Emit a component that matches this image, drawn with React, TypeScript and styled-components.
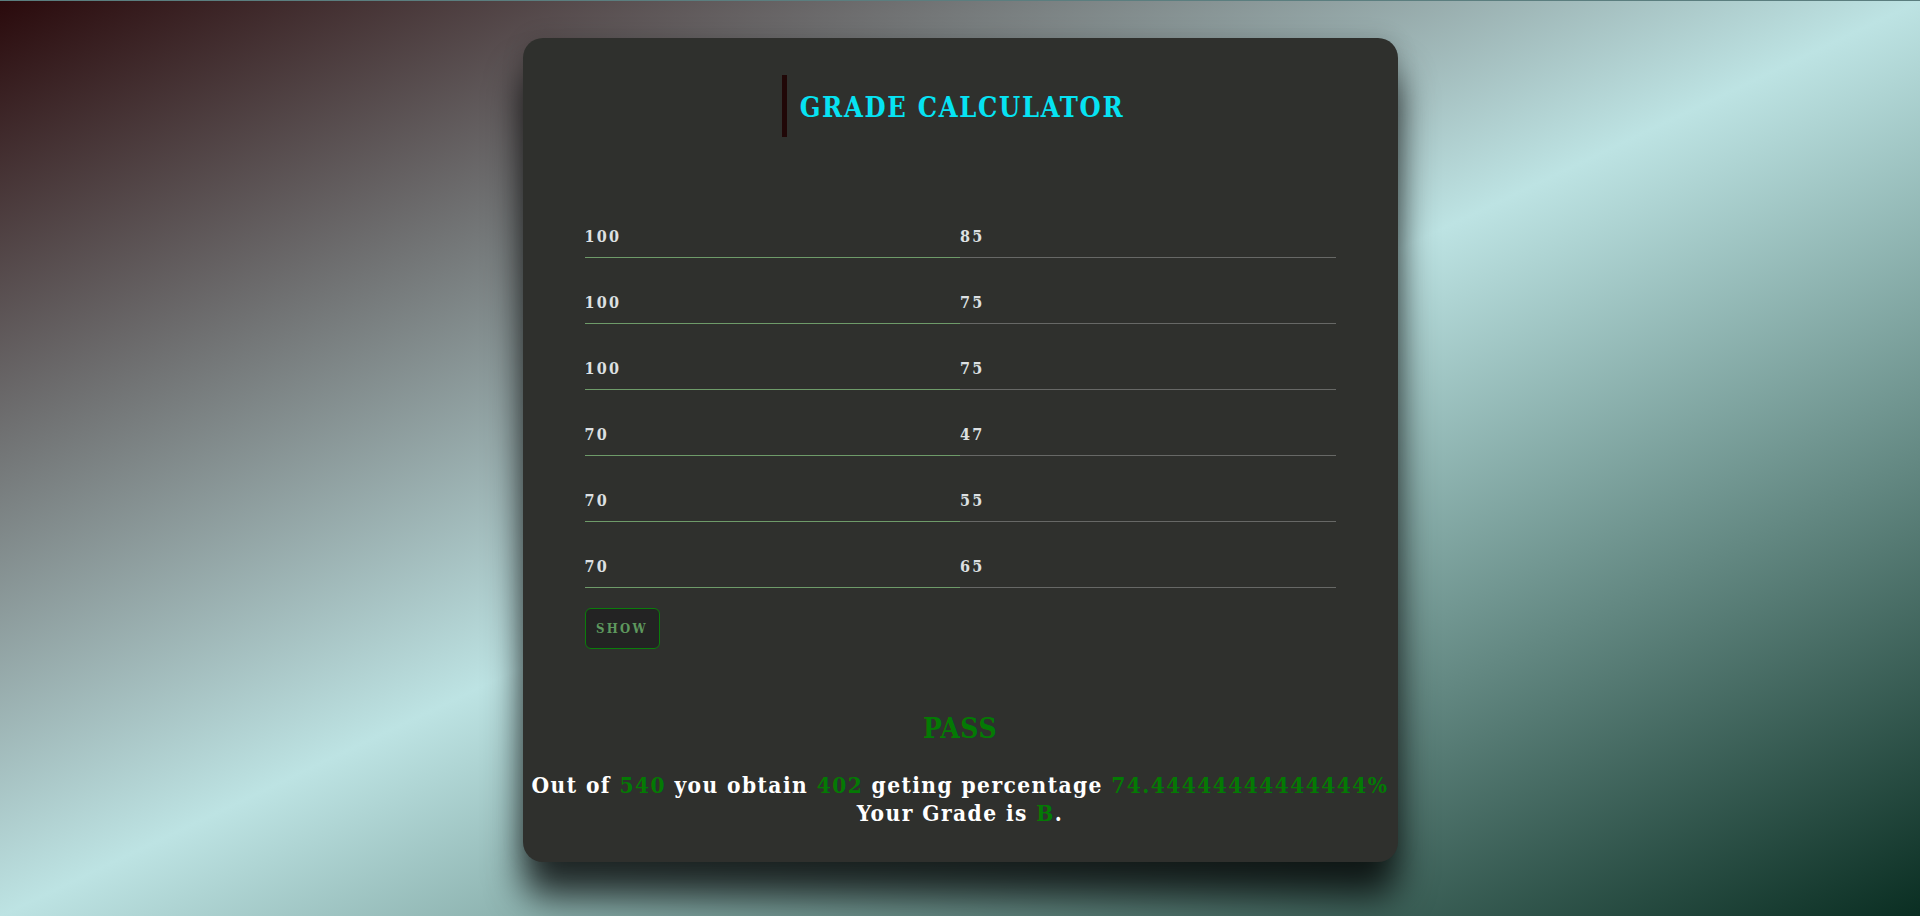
import React from "react";
import styled, { createGlobalStyle } from "styled-components";

const Global = createGlobalStyle`
  html, body { margin: 0; padding: 0; }
  body { font-family: "DejaVu Serif", "Liberation Serif", serif; }
  * { box-sizing: border-box; }
`;

const Page = styled.div`
  min-height: 916px;
  border-top: 1px solid #5b7e7f;
  background: linear-gradient(to bottom right, #2a0a0c 0%, #bde3e3 50%, #0a2e22 100%);
  padding-top: 37px;
  overflow: hidden;
`;

const Card = styled.main`
  width: 875px;
  height: 824px;
  margin: 0 auto;
  background: #2f302d;
  border-radius: 20px;
  padding: 37px 62px 30px;
  box-shadow: 0 34px 36px rgba(0, 0, 0, 0.78), 0 0 22px rgba(0, 0, 0, 0.16);
  display: flex;
  flex-direction: column;
`;

const Title = styled.h1`
  align-self: center;
  margin: 0 0 0 -14px;
  height: 62px;
  display: flex;
  align-items: center;
  border-left: 5px solid #200707;
  padding-left: 13px;
  padding-top: 2px;
  color: #06e3f3;
  font-family: "DejaVu Serif", serif;
  font-stretch: condensed;
  font-size: 27px;
  font-weight: 700;
  letter-spacing: 1.7px;
`;

const Form = styled.form`
  margin-top: 77px;
  display: flex;
  flex-direction: column;
  gap: 22px;
`;

const Row = styled.div`
  display: flex;
`;

const Field = styled.input<{ $side: "total" | "obtained" }>`
  flex: 1;
  min-width: 0;
  height: 44px;
  padding: 2px 0 0;
  margin: 0;
  background: transparent;
  border: none;
  border-bottom: 1px solid ${(p) => (p.$side === "total" ? "#6e9b69" : "#676866")};
  outline: none;
  color: #dde0e2;
  font-family: "DejaVu Serif", serif;
  font-stretch: condensed;
  font-size: 16px;
  font-weight: 700;
  letter-spacing: 2.2px;
`;

const ShowButton = styled.button`
  margin-top: 20px;
  width: 75px;
  height: 41px;
  padding: 0;
  background: #232323;
  border: 1px solid #0b7c0b;
  border-radius: 6px;
  color: #5e985e;
  font-family: "DejaVu Serif", serif;
  font-stretch: condensed;
  font-size: 13px;
  font-weight: 700;
  letter-spacing: 2.3px;
  cursor: pointer;
`;

const Status = styled.h2`
  margin: 64px 0 0;
  text-align: center;
  color: #047a04;
  font-family: "DejaVu Serif", serif;
  font-stretch: condensed;
  font-size: 28px;
  line-height: 32px;
  font-weight: 700;
  letter-spacing: 0.5px;
`;

const Summary = styled.p`
  margin: 26px -60px 0;
  text-align: center;
  color: #ffffff;
  font-family: "DejaVu Serif", serif;
  font-stretch: condensed;
  font-size: 22.5px;
  line-height: 28px;
  font-weight: 700;
  letter-spacing: 1.42px;
`;

const Hi = styled.span`
  color: #047a04;
`;

const rows: [string, string][] = [
  ["100", "85"],
  ["100", "75"],
  ["100", "75"],
  ["70", "47"],
  ["70", "55"],
  ["70", "65"],
];

export default function App() {
  return (
    <>
      <Global />
      <Page>
        <Card>
          <Title>GRADE CALCULATOR</Title>
          <Form onSubmit={(e) => e.preventDefault()}>
            {rows.map(([t, o], i) => (
              <Row key={i}>
                <Field $side="total" defaultValue={t} />
                <Field $side="obtained" defaultValue={o} />
              </Row>
            ))}
          </Form>
          <div>
            <ShowButton type="button">SHOW</ShowButton>
          </div>
          <Status>PASS</Status>
          <Summary>
            Out of <Hi>540</Hi> you obtain <Hi>402</Hi> geting percentage{" "}
            <Hi>74.44444444444444%</Hi>
            <br />
            Your Grade is <Hi>B</Hi>.
          </Summary>
        </Card>
      </Page>
    </>
  );
}
